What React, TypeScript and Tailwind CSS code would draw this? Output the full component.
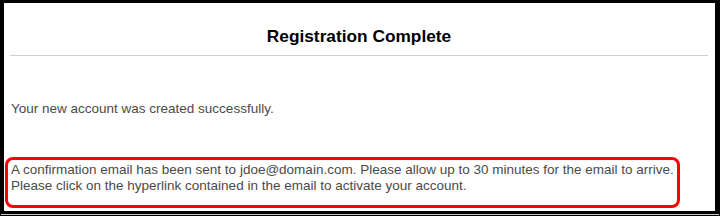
export default function App() {
  return (
    <div
      className="w-[720px] h-[216px] bg-black flex flex-col pt-[3px] overflow-hidden"
      style={{ fontFamily: '"Liberation Sans", Arial, sans-serif' }}
    >
      <div className="ml-[4px] mr-[5px] h-[208px] bg-white flex flex-col">
        {/* header */}
        <div className="ml-[6px] mr-[7px] pt-[23px] pb-[9px] border-b border-[#d0d0d0]">
          <h1 className="text-center text-[17.3px] leading-[20px] font-bold text-black">
            Registration Complete
          </h1>
        </div>

        <p className="ml-[7px] mt-[45px] text-[13.5px] leading-[16px] text-[#4a4a4a]">
          Your new account was created successfully.
        </p>

        <div className="ml-[1px] mr-[35px] mt-[40px] border-[3px] border-[#ff0000] rounded-[8px] pl-[3px] pt-[2px] pb-[11px]">
          <p className="text-[13.5px] leading-[16px] text-[#4a4a4a] whitespace-nowrap">
            A confirmation email has been sent to jdoe@domain.com. Please allow up to 30 minutes for the email to arrive.
            <br />
            Please click on the hyperlink contained in the email to activate your account.
          </p>
        </div>
      </div>
      <div className="mt-[3px] mx-[1px] h-px bg-[#c8c8c8]" />
    </div>
  );
}
